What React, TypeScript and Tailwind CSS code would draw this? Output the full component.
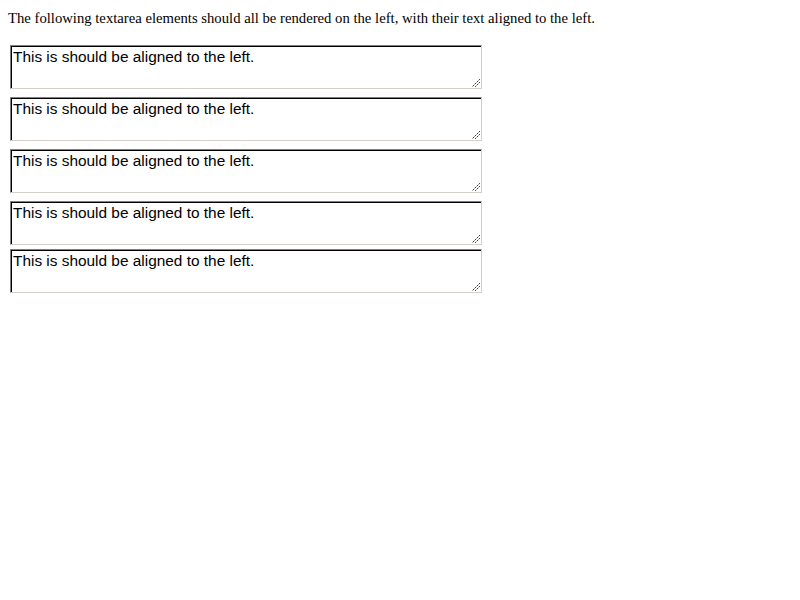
const rows = [0, 1, 2, 3, 4];

function Grip() {
  return (
    <svg className="absolute right-[2px] bottom-[2px]" width="8" height="8" viewBox="0 0 8 8" shapeRendering="crispEdges">
      <path d="M7 0h1v1h-1zM5 2h1v1h-1zM3 4h1v1h-1zM1 6h1v1h-1zM7 3h1v1h-1zM5 5h1v1h-1zM3 7h1v1h-1z" fill="#444" />
      <path d="M6 1h1v1h-1zM4 3h1v1h-1zM2 5h1v1h-1zM0 7h1v1h-1zM6 4h1v1h-1zM4 6h1v1h-1z" fill="#aaa" />
    </svg>
  );
}

function Box({ i }: { i: number }) {
  return (
    <div className={`relative ml-[2px] w-[472px] h-[44px] ${i < 3 ? 'mb-[8px]' : i === 3 ? 'mb-[4px]' : ''}`}>
      <textarea
        readOnly
        defaultValue="This is should be aligned to the left."
        className="block w-full h-full resize-none bg-white text-black text-left text-[15.4px] leading-[18px] pt-[2px] border border-t-[#808080] border-l-[#808080] border-r-[#d4d0c8] border-b-[#d4d0c8] shadow-[inset_1px_1px_0_#000,inset_-1px_-1px_0_#fff] outline-none overflow-hidden"
        style={{ fontFamily: '"Liberation Sans", Arial, sans-serif', paddingLeft: 2 }}
      />
      <Grip />
    </div>
  );
}

export default function App() {
  return (
    <div className="min-h-[600px] bg-white p-[8px]">
      <p className="text-[14.7px] leading-[18px] pt-[1px] mb-[18px] text-black" style={{ fontFamily: '"Liberation Serif", "Times New Roman", serif' }}>
        The following textarea elements should all be rendered on the left, with their text aligned to the left.
      </p>
      {rows.map((i) => (
        <Box key={i} i={i} />
      ))}
    </div>
  );
}
